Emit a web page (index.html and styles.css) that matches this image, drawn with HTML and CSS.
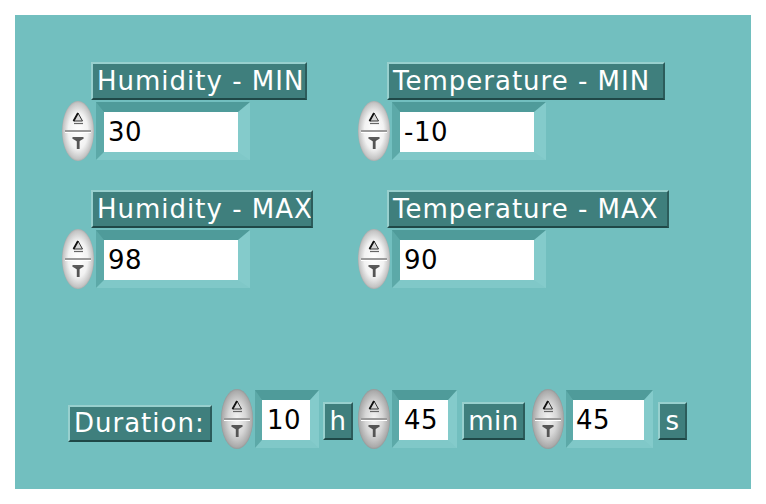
FILE: index.html
```html
<!DOCTYPE html>
<html>
<head>
<meta charset="utf-8">
<link rel="stylesheet" href="styles.css">
</head>
<body>
<svg width="0" height="0" class="defs">
  <defs>
    <radialGradient id="spinW" cx="50%" cy="50%" r="55%">
      <stop offset="0" stop-color="#ffffff"/>
      <stop offset="0.55" stop-color="#f2f2f2"/>
      <stop offset="0.85" stop-color="#c4c4c4"/>
      <stop offset="1" stop-color="#8a8a8a"/>
    </radialGradient>
    <radialGradient id="spinG" cx="50%" cy="50%" r="55%">
      <stop offset="0" stop-color="#f4f4f4"/>
      <stop offset="0.5" stop-color="#d6d6d6"/>
      <stop offset="0.85" stop-color="#aaaaaa"/>
      <stop offset="1" stop-color="#7a7a7a"/>
    </radialGradient>
    <symbol id="spin" viewBox="0 0 36 62">
      <line x1="5" y1="31" x2="31" y2="31" stroke="#9a9a9a" stroke-width="2"/>
      <line x1="5" y1="32.5" x2="31" y2="32.5" stroke="#ffffff" stroke-width="1"/>
      <polygon points="18,13 22.5,21 13.5,21" fill="#d8d8d8" stroke="#333" stroke-width="1"/>
      <line x1="13.5" y1="21" x2="18" y2="13" stroke="#111" stroke-width="1.8"/>
      <line x1="14" y1="23.5" x2="23" y2="23.5" stroke="#666" stroke-width="1.2"/>
      <polygon points="13,39 23,39 18,42" fill="#555"/>
      <rect x="16.8" y="40" width="2.8" height="9" fill="#555"/>
      <line x1="12.5" y1="38" x2="23.5" y2="38" stroke="#333" stroke-width="1.6"/>
    </symbol>
  </defs>
</svg>
<div class="panel">
  <div class="grid">
    <div class="ctl">
      <div class="lbl w-hmin">Humidity - MIN</div>
      <div class="row">
        <svg class="spinner" viewBox="0 0 36 62"><ellipse cx="18" cy="31" rx="16" ry="30" fill="url(#spinW)"/><use href="#spin"/></svg>
        <div class="frame"><div class="num wide">30</div></div>
      </div>
    </div>
    <div class="ctl">
      <div class="lbl w-tmin">Temperature - MIN</div>
      <div class="row">
        <svg class="spinner" viewBox="0 0 36 62"><ellipse cx="18" cy="31" rx="16" ry="30" fill="url(#spinW)"/><use href="#spin"/></svg>
        <div class="frame"><div class="num wide">-10</div></div>
      </div>
    </div>
    <div class="ctl">
      <div class="lbl w-hmax">Humidity - MAX</div>
      <div class="row">
        <svg class="spinner" viewBox="0 0 36 62"><ellipse cx="18" cy="31" rx="16" ry="30" fill="url(#spinW)"/><use href="#spin"/></svg>
        <div class="frame"><div class="num wide">98</div></div>
      </div>
    </div>
    <div class="ctl">
      <div class="lbl w-tmax">Temperature - MAX</div>
      <div class="row">
        <svg class="spinner" viewBox="0 0 36 62"><ellipse cx="18" cy="31" rx="16" ry="30" fill="url(#spinW)"/><use href="#spin"/></svg>
        <div class="frame"><div class="num wide">90</div></div>
      </div>
    </div>
  </div>
  <div class="duration">
    <div class="lbl dur-lbl">Duration:</div>
    <svg class="spinner s1" viewBox="0 0 36 62"><ellipse cx="18" cy="31" rx="16" ry="30" fill="url(#spinG)"/><use href="#spin"/></svg>
    <div class="frame small"><div class="num n-h">10</div></div>
    <div class="lbl unit u-h">h</div>
    <svg class="spinner s2" viewBox="0 0 36 62"><ellipse cx="18" cy="31" rx="16" ry="30" fill="url(#spinG)"/><use href="#spin"/></svg>
    <div class="frame small"><div class="num n-m">45</div></div>
    <div class="lbl unit u-m">min</div>
    <svg class="spinner s3" viewBox="0 0 36 62"><ellipse cx="18" cy="31" rx="16" ry="30" fill="url(#spinG)"/><use href="#spin"/></svg>
    <div class="frame small"><div class="num n-s">45</div></div>
    <div class="lbl unit u-s">s</div>
  </div>
</div>
</body>
</html>
```

FILE: styles.css
```css
html, body {
  margin: 0;
  padding: 0;
  background: #ffffff;
}
.defs {
  position: absolute;
  width: 0;
  height: 0;
}
.panel {
  margin: 15px 0 0 15px;
  width: 736px;
  height: 474px;
  background: #72bfbf;
  box-sizing: border-box;
  padding: 47px 0 0 45px;
  font-family: "DejaVu Sans", Verdana, sans-serif;
}
.grid {
  display: grid;
  grid-template-columns: 296px 296px;
  row-gap: 28px;
}
.ctl {
  display: flex;
  flex-direction: column;
  align-items: flex-start;
}
.lbl {
  background: #3f7f7d;
  color: #ffffff;
  font-size: 26px;
  line-height: 34px;
  height: 34px;
  padding: 0 4px 0 4px;
  border-top: 2px solid #98d0ce;
  border-left: 2px solid #98d0ce;
  border-bottom: 2px solid #1f4847;
  border-right: 2px solid #2c5c5b;
  white-space: nowrap;
  letter-spacing: 1px;
  overflow: hidden;
}
.ctl .lbl {
  margin-left: 31px;
  box-sizing: border-box;
  height: 38px;
}
.w-hmin { width: 216px; }
.w-tmin { width: 278px; }
.w-hmax { width: 222px; }
.w-tmax { width: 282px; }
.row {
  display: flex;
  align-items: flex-start;
}
.spinner {
  width: 36px;
  height: 62px;
  display: block;
  flex: none;
}
.frame {
  margin-top: 2px;
  border-top: 10px solid #4f9b9a;
  border-left: 8px solid #5ca9a8;
  border-right: 12px solid #84cbcb;
  border-bottom: 8px solid #80c8c8;
  background: #ffffff;
}
.num {
  height: 40px;
  line-height: 40px;
  font-size: 26px;
  color: #000000;
  padding-left: 4px;
  box-sizing: border-box;
  letter-spacing: 0.5px;
}
.num.wide {
  width: 134px;
}
.duration {
  display: flex;
  align-items: flex-start;
  margin-top: 98px;
  margin-left: 8px;
}
.dur-lbl {
  box-sizing: border-box;
  height: 37px;
  line-height: 33px;
  width: 144px;
  padding-left: 4px;
  margin-top: 17px;
}
.s1 { margin-left: 7px; }
.duration .frame.small {
  margin-top: 2px;
  border-left-width: 7px;
  border-right-width: 9px;
}
.n-h { width: 48px; padding-left: 5px; }
.n-m { width: 49px; padding-left: 5px; }
.n-s { width: 71px; padding-left: 3px; }
.unit {
  box-sizing: border-box;
  height: 38px;
  line-height: 34px;
  padding: 0;
  text-align: center;
  margin-top: 14px;
  letter-spacing: 0.5px;
}
.u-h { width: 30px; margin-left: 4px; }
.u-m { width: 63px; margin-left: 5px; }
.u-s { width: 29px; margin-left: 5px; }
.s2 { margin-left: 3px; }
.s3 { margin-left: 5px; }
```
